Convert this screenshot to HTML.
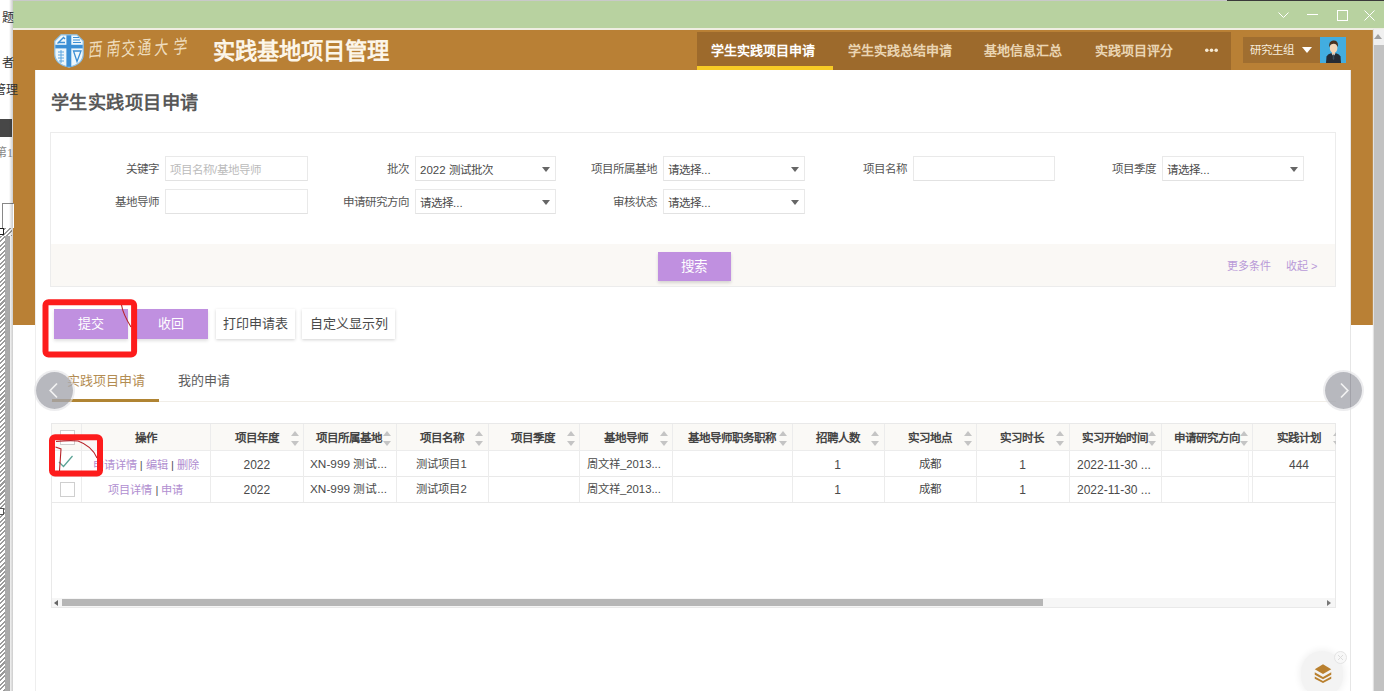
<!DOCTYPE html>
<html lang="zh-CN">
<head>
<meta charset="utf-8">
<style>
*{box-sizing:border-box;margin:0;padding:0}
html,body{width:1384px;height:691px;overflow:hidden;background:#fff;font-family:"Liberation Sans",sans-serif;position:relative}
.a{position:absolute}
.t{position:absolute;white-space:nowrap;line-height:1}
/* behind window */
#behind{left:0;top:0;width:13px;height:691px;background:#fff;overflow:hidden}
/* window */
#titlebar{left:13px;top:0;width:1371px;height:28px;background:#b8d2a0;border-top:1px solid #c9c9c9}
#tbline{left:13px;top:28px;width:1371px;height:2px;background:#efeee2}
#banner{left:13px;top:30px;width:1360px;height:295px;background:#b98035}
#nav{left:697px;top:32px;width:534px;height:38px;background:#9d6a2c}
#panel{left:35px;top:70px;width:1316px;height:621px;background:#fff;border-left:1px solid #eee;border-right:1px solid #e6e6e6}
#vscroll{left:1374px;top:29px;width:10px;height:662px;background:#c2c2c2;box-shadow:-1px 0 1px #e2e2e2}
.lbl{font-size:11.5px;color:#555;text-align:right}
.inp{position:absolute;height:25px;border:1px solid #e9e9e9;border-bottom-color:#e2e2e2;background:#fff}
.sel:after{content:"";position:absolute;right:5px;top:10px;border-left:4.5px solid transparent;border-right:4.5px solid transparent;border-top:5px solid #666}
.itx{position:absolute;left:4px;top:8px;font-size:11.5px;color:#4a4a4a;white-space:nowrap;line-height:1}
.btn{position:absolute;top:309px;height:30px;font-size:13px;line-height:30px;text-align:center}
.pb{background:#c090e0;color:#fff;box-shadow:0 2px 3px rgba(0,0,0,.12)}
.wb{background:#fff;color:#4a4a4a;box-shadow:0 1px 3px rgba(0,0,0,.18)}
.th{position:absolute;font-size:11.5px;font-weight:bold;color:#444;white-space:nowrap;line-height:1;top:433px}
.td{position:absolute;font-size:12px;color:#4a4a4a;white-space:nowrap;line-height:1}
.vl{position:absolute;width:1px;background:#ececec}
.hl{position:absolute;height:1px;background:#e8e8e8}
.sort{position:absolute;width:8px;height:15px}
.sort:before{content:"";position:absolute;left:0;top:0;border-left:4px solid transparent;border-right:4px solid transparent;border-bottom:5px solid #c4c4c4}
.sort:after{content:"";position:absolute;left:0;bottom:0;border-left:4px solid transparent;border-right:4px solid transparent;border-top:5px solid #c4c4c4}
.lk{color:#b08ed0}
.sp{color:#555}
</style>
</head>
<body>
<div id="behind" class="a"></div>
<div id="titlebar" class="a"></div>
<div id="tbline" class="a"></div>
<div id="banner" class="a"></div>
<div id="nav" class="a"></div>
<div id="panel" class="a"></div>
<div id="vscroll" class="a"></div>

<!-- window controls -->
<div class="a" style="left:1227px;top:0;width:157px;height:1px;background:#3a3a3a"></div>
<svg class="a" style="left:1270px;top:5px" width="114" height="20" viewBox="0 0 114 20">
 <polyline points="8.5,7.5 13.5,12.5 18.5,7.5" fill="none" stroke="#fff" stroke-width="1"/>
 <line x1="37" y1="9.5" x2="48" y2="9.5" stroke="#fff" stroke-width="1"/>
 <rect x="67.5" y="5.5" width="10" height="10" fill="none" stroke="#fff" stroke-width="1"/>
 <line x1="94.5" y1="5.5" x2="104.5" y2="15.5" stroke="#fff" stroke-width="1"/>
 <line x1="104.5" y1="5.5" x2="94.5" y2="15.5" stroke="#fff" stroke-width="1"/>
</svg>
<!-- logo -->
<svg class="a" style="left:54px;top:34px" width="30" height="34" viewBox="0 0 30 34">
 <path d="M7,0.8 L23,0.8 L29.2,7 L29.2,20 Q29.2,30 15,33.2 Q0.8,30 0.8,20 L0.8,7 Z" fill="#eef7fc" stroke="#8cc0e6" stroke-width="1.2"/>
 <rect x="1.3" y="10.8" width="27.4" height="3.6" fill="#3b8fd5"/>
 <rect x="12.4" y="1.3" width="4.9" height="31.5" fill="#3b8fd5"/>
 <path d="M3.5,9.5 L9.5,3.5 L11,5 M4,8.5 L11,8.5" fill="none" stroke="#3b8fd5" stroke-width="1.4"/>
 <path d="M19,3.5 L25,3.5 M19,6 L26,6 M19,8.5 L27,8.5" stroke="#3b8fd5" stroke-width="1"/>
 <path d="M19.5,17 L27,17 L23,27.5 Z" fill="none" stroke="#3b8fd5" stroke-width="1.3"/>
 <path d="M4,18 L10,18 M4,21 L10,21 M4,24 L10,24 M5,27 L10,27 M7,16 L7,29" stroke="#5da6e0" stroke-width="1"/>
</svg>
<div class="t" style="left:84.9px;top:40px;width:20px;text-align:center;font-size:19px;color:rgba(247,234,210,.88);font-family:'Liberation Serif',serif;transform:scaleX(0.72) skewX(-10deg) rotate(-4deg)">西</div>
<div class="t" style="left:102.9px;top:39px;width:20px;text-align:center;font-size:19px;color:rgba(247,234,210,.88);font-family:'Liberation Serif',serif;transform:scaleX(0.72) skewX(-10deg) rotate(-4deg)">南</div>
<div class="t" style="left:118.4px;top:39px;width:20px;text-align:center;font-size:19px;color:rgba(247,234,210,.88);font-family:'Liberation Serif',serif;transform:scaleX(0.72) skewX(-10deg) rotate(-4deg)">交</div>
<div class="t" style="left:134.4px;top:38px;width:20px;text-align:center;font-size:19px;color:rgba(247,234,210,.88);font-family:'Liberation Serif',serif;transform:scaleX(0.72) skewX(-10deg) rotate(-4deg)">通</div>
<div class="t" style="left:150.7px;top:38px;width:20px;text-align:center;font-size:19px;color:rgba(247,234,210,.88);font-family:'Liberation Serif',serif;transform:scaleX(0.72) skewX(-10deg) rotate(-4deg)">大</div>
<div class="t" style="left:169.6px;top:37px;width:20px;text-align:center;font-size:19px;color:rgba(247,234,210,.88);font-family:'Liberation Serif',serif;transform:scaleX(0.72) skewX(-10deg) rotate(-4deg)">学</div>
<div class="t" style="left:213px;top:41px;font-size:22.3px;font-weight:bold;color:#fcf5e8">实践基地项目管理</div>
<!-- nav -->
<div class="t" style="left:711px;top:44px;font-size:13px;font-weight:bold;color:#fff">学生实践项目申请</div>
<div class="a" style="left:697px;top:66px;width:136px;height:4px;background:#f8cb25"></div>
<div class="t" style="left:848px;top:44px;font-size:13px;font-weight:bold;color:#ead5b3">学生实践总结申请</div>
<div class="t" style="left:984px;top:44px;font-size:13px;font-weight:bold;color:#ead5b3">基地信息汇总</div>
<div class="t" style="left:1095px;top:44px;font-size:13px;font-weight:bold;color:#ead5b3">实践项目评分</div>
<svg class="a" style="left:1204px;top:48px" width="16" height="5"><circle cx="2.8" cy="2.3" r="1.8" fill="#f6ead4"/><circle cx="7.5" cy="2.3" r="1.8" fill="#f6ead4"/><circle cx="12.2" cy="2.3" r="1.8" fill="#f6ead4"/></svg>
<div class="a" style="left:1243px;top:37px;width:77px;height:26px;background:#a06e30"></div>
<div class="t" style="left:1250px;top:45px;font-size:11.5px;color:#f6ecdc">研究生组</div>
<div class="a" style="left:1302px;top:47px;width:0;height:0;border-left:5px solid transparent;border-right:5px solid transparent;border-top:6px solid #fff"></div>
<svg class="a" style="left:1320px;top:37px" width="26" height="26" viewBox="0 0 26 26">
 <rect width="26" height="26" fill="#42ade0"/>
 <path d="M6,26 L6.5,19.5 Q7.5,17 11,16.3 L16,16.3 Q19.5,17 20.5,19.5 L21,26 Z" fill="#262b33"/>
 <path d="M11.5,16.3 L13.5,19.5 L15.5,16.3 Z" fill="#e8eef0"/>
 <path d="M13,17.5 L14,17.5 L14.3,22 L13.5,23 L12.7,22 Z" fill="#3b4f5c"/>
 <rect x="12" y="14" width="3" height="3" fill="#ecc9a8"/>
 <ellipse cx="13.6" cy="11" rx="3.8" ry="5" fill="#f3d6b8"/>
 <path d="M9.3,10.5 Q8.5,4 13,3.5 Q18,3 18,8.5 L17.6,10 Q16.5,6.5 13.5,6.8 Q11,7 10.2,8 Q9.8,9 9.3,10.5 Z" fill="#4a3220"/>
</svg>
<!-- page scrollbar -->
<div class="a" style="left:1374px;top:29px;width:10px;height:16px;background:#f0f0f0"></div>
<div class="a" style="left:1374px;top:34px;width:0;height:0;border-left:4.5px solid transparent;border-right:4.5px solid transparent;border-bottom:5px solid #a0a0a0"></div>

<!-- page title -->
<div class="t" style="left:51px;top:94px;font-size:18.2px;letter-spacing:0.45px;font-weight:bold;color:#585858">学生实践项目申请</div>
<!-- search panel -->
<div class="a" style="left:50px;top:132px;width:1286px;height:155px;border:1px solid #ececec;background:#fff"></div>
<div class="a" style="left:51px;top:244px;width:1284px;height:42px;background:#faf8f5"></div>
<div class="t lbl" style="left:101px;top:164px;width:58px">关键字</div>
<div class="inp" style="left:165px;top:156px;width:143px"><span class="itx" style="color:#bbb">项目名称/基地导师</span></div>
<div class="t lbl" style="left:301px;top:164px;width:108px">批次</div>
<div class="inp sel" style="left:415px;top:156px;width:141px"><span class="itx">2022 测试批次</span></div>
<div class="t lbl" style="left:551px;top:164px;width:106px">项目所属基地</div>
<div class="inp sel" style="left:663px;top:156px;width:142px"><span class="itx">请选择...</span></div>
<div class="t lbl" style="left:801px;top:164px;width:106px">项目名称</div>
<div class="inp" style="left:913px;top:156px;width:142px"></div>
<div class="t lbl" style="left:1051px;top:164px;width:105px">项目季度</div>
<div class="inp sel" style="left:1162px;top:156px;width:142px"><span class="itx">请选择...</span></div>
<div class="t lbl" style="left:101px;top:197px;width:58px">基地导师</div>
<div class="inp" style="left:165px;top:189px;width:143px"></div>
<div class="t lbl" style="left:301px;top:197px;width:108px">申请研究方向</div>
<div class="inp sel" style="left:415px;top:189px;width:141px"><span class="itx">请选择...</span></div>
<div class="t lbl" style="left:551px;top:197px;width:106px">审核状态</div>
<div class="inp sel" style="left:663px;top:189px;width:142px"><span class="itx">请选择...</span></div>
<div class="a" style="left:658px;top:252px;width:73px;height:29px;background:#c090e0;box-shadow:0 2px 3px rgba(0,0,0,.15)"></div>
<div class="t" style="left:681px;top:260px;font-size:13.5px;color:#fff">搜索</div>
<div class="t" style="left:1227px;top:261px;font-size:11px;color:#b99ad8">更多条件</div>
<div class="t" style="left:1286px;top:261px;font-size:11px;color:#b99ad8">收起 &gt;</div>
<!-- toolbar -->
<div class="btn pb" style="left:54px;width:74px">提交</div>
<div class="btn pb" style="left:134px;width:74px">收回</div>
<div class="btn wb" style="left:216px;width:79px">打印申请表</div>
<div class="btn wb" style="left:302px;width:93px">自定义显示列</div>
<!-- tabs -->
<div class="t" style="left:67px;top:374px;font-size:13px;color:#b38c52">实践项目申请</div>
<div class="t" style="left:178px;top:374px;font-size:13px;color:#5e5e5e">我的申请</div>
<div class="hl" style="left:51px;top:401px;width:1285px;background:#f1eee8"></div>
<div class="a" style="left:52px;top:399px;width:107px;height:3px;background:#b08433"></div>
<!--TABLE-->
<div class="a" style="left:51px;top:423px;width:1285px;height:185px;border:1px solid #e9e9e9;background:#fff"></div>
<div class="a" style="left:52px;top:424px;width:1283px;height:26px;background:#faf9f6"></div>
<div class="hl" style="left:52px;top:450px;width:1283px;background:#ececec"></div>
<div class="hl" style="left:52px;top:476px;width:1283px;background:#e9e9e9"></div>
<div class="hl" style="left:52px;top:502px;width:1283px;background:#e9e9e9"></div>
<div class="vl" style="left:81px;top:424px;height:78px"></div>
<div class="vl" style="left:210px;top:424px;height:78px"></div>
<div class="vl" style="left:303px;top:424px;height:78px"></div>
<div class="vl" style="left:396px;top:424px;height:78px"></div>
<div class="vl" style="left:488px;top:424px;height:78px"></div>
<div class="vl" style="left:579px;top:424px;height:78px"></div>
<div class="vl" style="left:672px;top:424px;height:78px"></div>
<div class="vl" style="left:792px;top:424px;height:78px"></div>
<div class="vl" style="left:884px;top:424px;height:78px"></div>
<div class="vl" style="left:976px;top:424px;height:78px"></div>
<div class="vl" style="left:1069px;top:424px;height:78px"></div>
<div class="vl" style="left:1161px;top:424px;height:78px"></div>
<div class="vl" style="left:1252px;top:424px;height:78px"></div>
<div class="vl" style="left:1248px;top:451px;height:51px;background:#f2f2f2"></div>
<div class="th" style="left:81.3px;width:129.1px;text-align:center">操作</div>
<div class="th" style="left:210.4px;width:92.9px;text-align:center">项目年度</div>
<div class="sort" style="left:290.8px;top:430.5px"></div>
<div class="th" style="left:303.3px;width:92.4px;text-align:center">项目所属基地</div>
<div class="sort" style="left:383.2px;top:430.5px"></div>
<div class="th" style="left:395.7px;width:91.9px;text-align:center">项目名称</div>
<div class="sort" style="left:475.1px;top:430.5px"></div>
<div class="th" style="left:487.6px;width:91.8px;text-align:center">项目季度</div>
<div class="sort" style="left:566.9px;top:430.5px"></div>
<div class="th" style="left:579.4px;width:92.8px;text-align:center">基地导师</div>
<div class="sort" style="left:659.7px;top:430.5px"></div>
<div class="th" style="left:672.2px;width:119.6px;text-align:center">基地导师职务职称</div>
<div class="sort" style="left:779.3px;top:430.5px"></div>
<div class="th" style="left:791.8px;width:91.8px;text-align:center">招聘人数</div>
<div class="sort" style="left:871.1px;top:430.5px"></div>
<div class="th" style="left:883.6px;width:92.8px;text-align:center">实习地点</div>
<div class="sort" style="left:963.9px;top:430.5px"></div>
<div class="th" style="left:976.4px;width:92.2px;text-align:center">实习时长</div>
<div class="sort" style="left:1056.1px;top:430.5px"></div>
<div class="th" style="left:1068.6px;width:92.0px;text-align:center">实习开始时间</div>
<div class="sort" style="left:1148.1px;top:430.5px"></div>
<div class="th" style="left:1160.6px;width:91.9px;text-align:center">申请研究方向</div>
<div class="sort" style="left:1240.0px;top:430.5px"></div>
<div class="th" style="left:1252.5px;width:93.0px;text-align:center">实践计划</div>
<div class="sort" style="left:1333.0px;top:430.5px"></div>
<div class="a" style="left:60px;top:430px;width:15px;height:15px;border:1px solid #cfcfcf;background:#fff"></div>
<div class="a" style="left:60px;top:482px;width:15px;height:15px;border:1px solid #cfcfcf;background:#fff"></div>
<svg class="a" style="left:56px;top:452px" width="22" height="20"><polyline points="3,10 7.5,14.5 16.5,4" fill="none" stroke="#5aa396" stroke-width="1.25"/></svg>
<div class="td" style="left:81.3px;width:129.1px;top:460px;text-align:center;font-size:11.2px"><span class="lk">申请详情</span> <span class="sp">|</span> <span class="lk">编辑</span> <span class="sp">|</span> <span class="lk">删除</span></div>
<div class="td" style="left:81.3px;width:129.1px;top:485px;text-align:center;font-size:11.2px"><span class="lk">项目详情</span> <span class="sp">|</span> <span class="lk">申请</span></div>
<div class="td" style="left:210.4px;width:92.9px;top:459px;text-align:center;">2022</div>
<div class="td" style="left:310px;top:459px;font-size:11.8px">XN-999 测试...</div>
<div class="td" style="left:587px;top:459px;font-size:11.3px">周文祥_2013...</div>
<div class="td" style="left:791.8px;width:91.8px;top:459px;text-align:center;">1</div>
<div class="td" style="left:883.6px;width:92.8px;top:459px;text-align:center;font-size:11.5px">成都</div>
<div class="td" style="left:976.4px;width:92.2px;top:459px;text-align:center;">1</div>
<div class="td" style="left:1077px;top:459px;">2022-11-30 ...</div>
<div class="td" style="left:210.4px;width:92.9px;top:484px;text-align:center;">2022</div>
<div class="td" style="left:310px;top:484px;font-size:11.8px">XN-999 测试...</div>
<div class="td" style="left:587px;top:484px;font-size:11.3px">周文祥_2013...</div>
<div class="td" style="left:791.8px;width:91.8px;top:484px;text-align:center;">1</div>
<div class="td" style="left:883.6px;width:92.8px;top:484px;text-align:center;font-size:11.5px">成都</div>
<div class="td" style="left:976.4px;width:92.2px;top:484px;text-align:center;">1</div>
<div class="td" style="left:1077px;top:484px;">2022-11-30 ...</div>
<div class="td" style="left:395.7px;width:91.9px;top:459px;text-align:center;font-size:11.3px">测试项目1</div>
<div class="td" style="left:395.7px;width:91.9px;top:484px;text-align:center;font-size:11.3px">测试项目2</div>
<div class="td" style="left:1252.5px;width:93.0px;top:459px;text-align:center;">444</div>
<div class="a" style="left:1336px;top:420px;width:13px;height:190px;background:#fff"></div>
<div class="a" style="left:52px;top:598px;width:1283px;height:9px;background:#f6f6f6"></div>
<div class="a" style="left:62px;top:598.5px;width:981px;height:7.5px;background:#b6b6b6"></div>
<div class="a" style="left:54px;top:599.5px;width:0;height:0;border-top:3.5px solid transparent;border-bottom:3.5px solid transparent;border-right:4.5px solid #666"></div>
<div class="a" style="left:1327px;top:599.5px;width:0;height:0;border-top:3.5px solid transparent;border-bottom:3.5px solid transparent;border-left:4.5px solid #777"></div>
<!--/TABLE-->
<!--EXTRA-->
<!-- carousel arrows -->
<div class="a" style="left:35.8px;top:371.5px;width:37px;height:37px;border-radius:50%;background:rgba(165,166,174,.8);box-shadow:0 0 0 2px rgba(228,228,230,.65)"></div>
<svg class="a" style="left:35.8px;top:371.5px" width="37" height="37"><polyline points="21,11.5 14.2,18.5 21,25.5" fill="none" stroke="#f2f2f2" stroke-width="1.7"/></svg>
<div class="a" style="left:1325.3px;top:371.5px;width:37px;height:37px;border-radius:50%;background:rgba(165,166,174,.8);box-shadow:0 0 0 2px rgba(228,228,230,.65)"></div>
<svg class="a" style="left:1325.3px;top:371.5px" width="37" height="37"><polyline points="16,11.5 22.8,18.5 16,25.5" fill="none" stroke="#f2f2f2" stroke-width="1.7"/></svg>
<div class="a" style="left:1349.5px;top:374px;width:1px;height:33px;background:rgba(90,90,100,.18)"></div>
<!-- floating layers button -->
<div class="a" style="left:1301px;top:651px;width:42px;height:46px;border-radius:21px;background:#f3f3f3;box-shadow:0 0 6px 2px rgba(0,0,0,.05)"></div>
<svg class="a" style="left:1312px;top:662px" width="22" height="22" viewBox="0 0 24 24">
 <path d="M12,2.5 L21,8 L12,13 L3,8 Z" fill="#b9802f"/>
 <path d="M3,11.3 L12,16.3 L21,11.3 L21,13.8 L12,18.8 L3,13.8 Z" fill="#b9802f"/>
 <path d="M3,15.8 L12,20.8 L21,15.8 L21,18.3 L12,23 L3,18.3 Z" fill="#b9802f"/>
</svg>
<div class="a" style="left:1334px;top:651px;width:13px;height:13px;border-radius:50%;border:1px solid #e4e4e4;background:#f8f8f8"></div>
<svg class="a" style="left:1334px;top:651px" width="13" height="13"><path d="M4,4 L9,9 M9,4 L4,9" stroke="#dcdcdc" stroke-width="1"/></svg>
<!-- red annotations -->
<svg class="a" style="left:0;top:0" width="1384" height="691">
 <rect x="45.5" y="302.3" width="88.6" height="52.3" rx="3" fill="none" stroke="#fd1c1c" stroke-width="6"/>
 <path d="M121.5,305 Q123,314 131,327" fill="none" stroke="#b8232a" stroke-width="1.1"/>
 <rect x="52" y="437.2" width="48" height="36.4" rx="3" fill="none" stroke="#fd1c1c" stroke-width="6"/>
 <path d="M56,441.5 Q70,440 78,441 Q92,446 97,458" fill="none" stroke="#b8232a" stroke-width="1.1"/>
 <path d="M55.5,447 L61,449 L59.5,471" fill="none" stroke="#b8232a" stroke-width="1.1"/>
</svg>
<!-- behind window strip -->
<div class="t" style="left:1.5px;top:12px;font-size:12px;color:#333;font-family:'Liberation Serif',serif">题</div>
<div class="t" style="left:2px;top:57px;font-size:12px;color:#333;font-family:'Liberation Serif',serif">者</div>
<div class="t" style="left:-6px;top:84px;font-size:12px;color:#333;font-family:'Liberation Serif',serif">管理</div>
<div class="a" style="left:0;top:119px;width:12px;height:18px;background:#474747"></div>
<div class="t" style="left:-5px;top:147px;font-size:12px;color:#888;font-family:'Liberation Serif',serif">第1</div>
<div class="a" style="left:2px;top:203px;width:12px;height:25px;border:1px solid #888;border-right:none;border-bottom:none;background:#fff"></div>
<div class="a" style="left:0;top:228px;width:12px;height:8px;background:repeating-linear-gradient(135deg,#9a9a9a 0 1.5px,#fff 1.5px 3.2px)"></div>
<div class="a" style="left:0;top:236px;width:5px;height:455px;background:repeating-linear-gradient(135deg,#9a9a9a 0 1.5px,#fff 1.5px 3.2px)"></div>
<div class="a" style="left:5px;top:236px;width:4.5px;height:455px;background:#aaa"></div>
<div class="a" style="left:-1px;top:228px;width:5px;height:7px;border:1px solid #222;background:#fff"></div>
<div class="a" style="left:-1px;top:508px;width:5px;height:7px;border:1px solid #555;background:#fff"></div>
<div class="a" style="left:9px;top:0;width:4px;height:691px;background:linear-gradient(90deg,rgba(0,0,0,0),rgba(0,0,0,.2))"></div>
<!--/EXTRA-->
</body>
</html>
